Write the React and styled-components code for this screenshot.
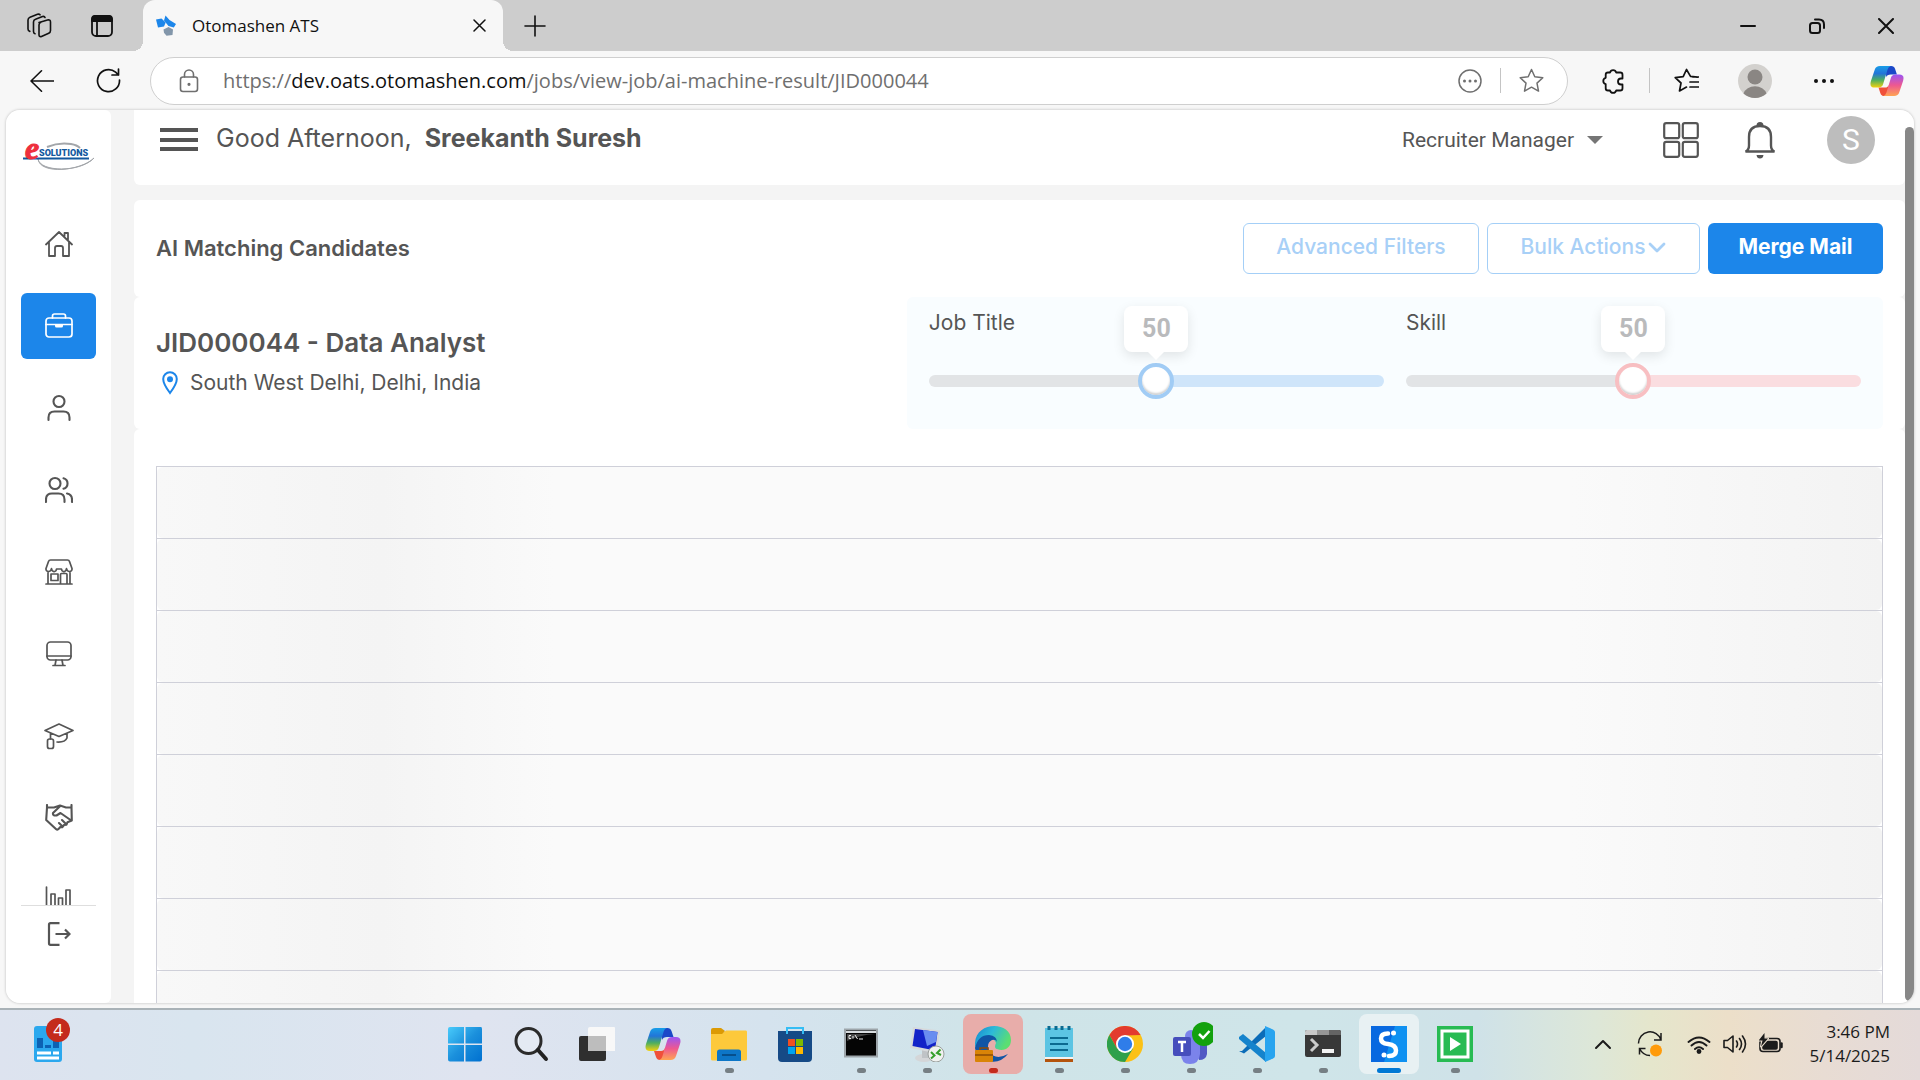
import React, { useState } from "react";
import styled, { createGlobalStyle, css } from "styled-components";

const GlobalStyle = createGlobalStyle`
  * { box-sizing: border-box; }
  html, body { margin: 0; height: 100%; }
  body { overflow: hidden; background: #f7f7f7; }
  button, input, select { font: inherit; color: inherit; }
  button { border: 0; background: none; padding: 0; }
  svg { display: block; flex: none; }
`;

const system = `"Open Sans", "Noto Sans", sans-serif`;
const brand = `Inter, "Liberation Sans", sans-serif`;

/* ---------- shell ---------- */

const Screen = styled.div`
  height: 100vh;
  display: flex;
  flex-direction: column;
  font-family: ${brand};
  color: #555;
`;

const IconButton = styled.button`
  flex: none;
  display: flex;
  align-items: center;
  justify-content: center;
  width: ${(p) => p.$w || 48}px;
  height: ${(p) => p.$h || 48}px;
  color: ${(p) => p.$color || "#111"};
`;

/* ---------- browser chrome ---------- */

const TabStrip = styled.header`
  flex: none;
  height: 51px;
  display: flex;
  align-items: center;
  background: #cdcdcd;
  font-family: ${system};
  color: #111;
`;

const StripStart = styled.div`
  display: flex;
  gap: 15px;
  padding: 0 17px 0 15px;
`;

const Tab = styled.div`
  position: relative;
  align-self: stretch;
  width: 360px;
  display: flex;
  align-items: center;
  gap: 16px;
  padding: 0 12px 0 13px;
  background: #f7f7f7;
  border-radius: 12px 12px 0 0;
  &::before, &::after {
    content: "";
    position: absolute;
    bottom: 0;
    width: 10px;
    height: 10px;
  }
  &::before { left: -10px; background: radial-gradient(circle at 0 0, transparent 10px, #f7f7f7 10px); }
  &::after { right: -10px; background: radial-gradient(circle at 100% 0, transparent 10px, #f7f7f7 10px); }
`;

const TabTitle = styled.span`
  flex: 1;
  font-size: 17px;
  line-height: 24px;
`;

const WindowControls = styled.div`
  margin-left: auto;
  display: flex;
`;

const Toolbar = styled.div`
  flex: none;
  height: 59px;
  display: flex;
  align-items: center;
  padding: 0 3px 0 18px;
  background: #f7f7f7;
  font-family: ${system};
`;

const AddressBar = styled.div`
  flex: 1;
  min-width: 0;
  height: 48px;
  margin-right: 12px;
  display: flex;
  align-items: center;
  padding: 0 12px 0 28px;
  background: #fff;
  border: 1px solid #cfcfcf;
  border-radius: 24px;
  color: #6f6f6f;
`;

const Address = styled.span`
  flex: 1;
  padding-left: 24px;
  font-size: 20px;
  line-height: 28px;
  white-space: nowrap;
  strong { font-weight: 400; color: #111; }
`;

const Rule = styled.span`
  flex: none;
  width: 1px;
  height: 25px;
  margin: 0 ${(p) => p.$gap || 6}px;
  background: #c4c4c4;
`;

/* ---------- page ---------- */

const Page = styled.div`
  flex: 1;
  min-height: 0;
  display: flex;
  margin: 0 6px 5px;
  overflow: hidden;
  background: #f4f4f4;
  border-radius: 14px;
  box-shadow: 0 0 3px rgba(0, 0, 0, 0.25);
`;

const Sidebar = styled.aside`
  flex: none;
  width: 105px;
  display: flex;
  flex-direction: column;
  padding: 0 15px;
  background: #fff;
  border-radius: 0 6px 6px 0;
`;

const LogoLink = styled.a`
  flex: none;
  height: 101px;
  padding-top: 20px;
  display: flex;
  align-items: flex-start;
  justify-content: center;
`;

const NavList = styled.nav`
  flex: 1;
  min-height: 0;
  overflow: hidden;
  display: flex;
  flex-direction: column;
  gap: 16px;
`;

const NavLink = styled.a`
  flex: none;
  height: ${(p) => p.$h || 66}px;
  display: flex;
  align-items: center;
  justify-content: center;
  border-radius: 6px;
  color: #555;
  ${(p) => p.$active && css`
    background: #1c86ea;
    color: #fff;
  `}
`;

const SidebarFooter = styled.div`
  flex: none;
  border-top: 1px solid #dedede;
  padding-bottom: 41px;
`;

const Main = styled.main`
  flex: 1;
  min-width: 0;
  margin-left: 23px;
  overflow: hidden;
`;

const ScrollRail = styled.div`
  flex: none;
  width: 9px;
  display: flex;
  padding: 17px 0 2px;
  background: #fff;
`;

const ScrollThumb = styled.div`
  flex: 1;
  border-radius: 5px;
  background: #878787;
`;

const Card = styled.section`
  background: #fff;
  border-radius: 6px;
  padding: ${(p) => p.$pad || "0 22px"};
`;

const PageHeader = styled.div`
  display: flex;
  align-items: center;
  height: 75px;
  margin-bottom: 15px;
  padding: 0 30px 16px 26px;
  background: #fff;
  border-radius: 0 0 6px 6px;
`;

const MenuButton = styled.button`
  display: flex;
  flex-direction: column;
  justify-content: space-between;
  width: 38px;
  height: 23px;
  margin-right: 18px;
  i { height: 4px; background: #555; }
`;

const Greeting = styled.p`
  flex: 1;
  margin: 0;
  padding-bottom: 4px;
  font-size: 25px;
  line-height: 32px;
  b { margin-left: 6px; font-weight: 700; }
`;

const RoleSelect = styled.label`
  display: flex;
  align-items: center;
  margin-right: 60px;
  font-family: Roboto, sans-serif;
  font-size: 21px;
  select {
    appearance: none;
    border: 0;
    padding: 0;
    background: none;
    line-height: 28px;
  }
  svg { margin-left: 12px; }
`;

const HeaderActions = styled.div`
  display: flex;
  align-items: center;
  gap: 45px;
`;

const Avatar = styled.button`
  width: 48px;
  height: 48px;
  margin-left: 6px;
  border-radius: 50%;
  background: #bdbdbd;
  color: #fff;
  font-family: Roboto, sans-serif;
  font-size: 30px;
`;

const TitleRow = styled.div`
  height: 97px;
  display: flex;
  align-items: center;
  justify-content: space-between;
  h1 {
    margin: 0;
    padding-bottom: 2px;
    font-size: 22px;
    line-height: 28px;
    font-weight: 600;
  }
`;

const ButtonRow = styled.div`
  display: flex;
  gap: 8px;
`;

const ActionButton = styled.button`
  height: 51px;
  min-width: ${(p) => p.$min}px;
  display: flex;
  align-items: center;
  justify-content: center;
  gap: 3px;
  border-radius: 6px;
  font-size: 21px;
  line-height: 28px;
  padding-bottom: 3px;
  ${(p) => p.$primary ? css`
    background: #1c86ea;
    color: #fff;
    font-weight: 700;
  ` : css`
    border: 1px solid #a4cff7;
    color: #a8d0f7;
    font-weight: 500;
  `}
`;

const JobRow = styled.div`
  display: grid;
  grid-template-columns: 10fr 13fr;
`;

const JobInfo = styled.div`
  padding-top: 28px;
  h2 {
    margin: 0;
    font-size: 26px;
    line-height: 36px;
    font-weight: 600;
  }
  p {
    display: flex;
    align-items: center;
    gap: 12px;
    margin: 8px 0 0;
    padding-left: 6px;
    font-size: 21px;
    line-height: 28px;
  }
`;

const WeightPanel = styled.div`
  display: grid;
  grid-template-columns: 1fr 1fr;
  gap: 22px;
  height: 132px;
  padding: 0 22px;
  border-radius: 6px;
  background: #f9fdff;
`;

const Weight = styled.div`
  position: relative;
  display: flex;
  flex-direction: column;
  padding-top: 12px;
  label {
    font-size: 21px;
    line-height: 28px;
  }
`;

const Bubble = styled.output`
  position: absolute;
  top: 9px;
  transform: translateX(-50%);
  width: 64px;
  height: 46px;
  border-radius: 8px;
  background: #fff;
  box-shadow: 0 4px 12px rgba(0, 0, 0, 0.1);
  color: #b9babc;
  font-size: 25px;
  line-height: 46px;
  font-weight: 700;
  font-family: Roboto, sans-serif;
  text-align: center;
  &::after {
    content: "";
    position: absolute;
    left: 24px;
    top: 46px;
    border: 8px solid transparent;
    border-top-color: #fff;
    border-bottom: 0;
  }
`;

const Range = styled.input`
  appearance: none;
  width: 100%;
  height: 36px;
  margin: 26px 0 0;
  background: none;
  &::-webkit-slider-runnable-track {
    height: 12px;
    border-radius: 6px;
    background: linear-gradient(90deg, #e2e4e6 50%, ${(p) => p.$track} 50%);
  }
  &::-webkit-slider-thumb {
    appearance: none;
    width: 36px;
    height: 36px;
    margin-top: -12px;
    border: 4px solid ${(p) => p.$ring};
    border-radius: 50%;
    background: #fff;
    box-shadow: inset 0 -2px 2px rgba(0, 0, 0, 0.18);
  }
`;

const CandidateTable = styled.table`
  width: 100%;
  border-collapse: collapse;
  border: 1px solid #cfd0d9;
  td {
    height: 72px;
    padding: 0;
    border-top: 1px solid #cfd0d9;
  }
`;

const Skeleton = styled.div`
  height: 71px;
  border-radius: 6px;
  background: linear-gradient(90deg, #f8f8f8 0, #f4f4f4 13%, #fafafa 23%, #fafafa 82%, #f3f3f3 100%);
`;

/* ---------- taskbar ---------- */

const Taskbar = styled.footer`
  flex: none;
  height: 72px;
  display: grid;
  grid-template-columns: 1fr auto 1fr;
  align-items: center;
  padding-bottom: 2px;
  border-top: 2px solid #a9b2b7;
  background: linear-gradient(90deg, #dde3ef 0, #d9e5ef 10%, #dfe4f0 25%, #d5e3ee 40%, #cfe4e8 52%, #cfe5e9 68%, #cfe2e8 77%, #dde7d8 83%, #e5e6cc 86%, #ecdfc9 90%, #e8dcd3 95%, #e4dad9 100%);
  font-family: ${system};
  color: #1b1b1b;
`;

const WidgetButton = styled.button`
  position: relative;
  justify-self: start;
  margin-left: 34px;
`;

const Badge = styled.span`
  position: absolute;
  left: 12px;
  top: -8px;
  width: 24px;
  height: 24px;
  border-radius: 50%;
  background: #c42b1c;
  color: #fff;
  font-size: 17px;
  line-height: 23px;
  text-align: center;
`;

const AppList = styled.div`
  display: flex;
`;

const AppSlot = styled.div`
  width: 66px;
  display: flex;
  justify-content: center;
`;

const AppButton = styled.button`
  position: relative;
  width: 60px;
  height: 60px;
  display: flex;
  align-items: center;
  justify-content: center;
  border-radius: 8px;
  background: ${(p) => p.$bg || "none"};
  &::after {
    content: "";
    position: absolute;
    bottom: 1px;
    width: ${(p) => (p.$mark === "#0078d4" ? 24 : 9)}px;
    height: 5px;
    border-radius: 3px;
    background: ${(p) => p.$mark || "none"};
  }
`;

const Tray = styled.div`
  justify-self: end;
  display: flex;
  align-items: center;
  padding-right: 30px;
`;

const TrayButton = styled.button`
  display: flex;
  align-items: center;
  justify-content: center;
  gap: 12px;
  margin-right: ${(p) => p.$gap}px;
`;

const Clock = styled.time`
  font-size: 17px;
  line-height: 24px;
  text-align: right;
  span { display: block; }
`;

/* ---------- icons ---------- */

const Line = ({ s = 24, w = s, vb = `0 0 ${w} ${s}`, sw = 2, children }) => (
  <svg width={w} height={s} viewBox={vb} fill="none" stroke="currentColor" strokeWidth={sw} strokeLinecap="round" strokeLinejoin="round" aria-hidden="true">
    {children}
  </svg>
);

const Workspaces = () => (
  <Line s={26} sw={1.6}>
    <path d="M13 9.5 21.500 7q3-.6 3 2v8.500q0 2-1.800 2.800l-7.200 3.200q-2.500.7-2.500-1.800V12q0-1.800 1.600-2.400z" />
    <path d="M19 4.500q-.5-1.500-2.500-1l-7 2.800Q7.500 7 7.500 9v9.500q0 1.800 1.500 2.200" />
    <path d="M14 1.800q-.8-1-2.500-.5L4 4.200Q2 5 2 7v9q0 2 1.800 2.400" />
  </Line>
);
const TabMenu = () => (
  <Line s={24} sw={1.8}>
    <rect x="2" y="2" width="20" height="20" rx="4" />
    <path d="M2 7V5q0-3 3-3h14q3 0 3 3v2z" fill="currentColor" />
    <path d="M7 8v13.500" />
  </Line>
);
const Favicon = () => (
  <svg width="20" height="21" viewBox="0 0 20 21" aria-hidden="true">
    <path d="M9.500.5 13.500 5l6.500 4-2.200 3.500-5.300-1.500L8 5.500z" fill="#1c86ea" />
    <path d="M0 4.500 5.500 3.500l4.200 4L8 11.500l-6 1z" fill="#1c86ea" />
    <path d="m7.500 14.500 5-2.500 4.500 2.500-.5 5.500-6 .8-2.500-3z" fill="#8296aa" />
  </svg>
);
const Cross = ({ s = 13, sw = 1.5 }) => <Line s={s} sw={sw}><path d={`M1 1 ${s - 1} ${s - 1}M${s - 1} 1 1 ${s - 1}`} /></Line>;
const Plus = () => <Line s={22} sw={1.6}><path d="M11 1v20M1 11h20" /></Line>;
const Minus = () => <Line s={16} sw={2}><path d="M1 8h14" /></Line>;
const Restore = () => (
  <Line s={16} sw={2}><rect x="1" y="5" width="10" height="10" rx="2.5" /><path d="M6 1.500h4q5 0 5 5V10" /></Line>
);
const Back = () => <Line s={24} sw={1.6}><path d="M23.500 12H1M11.500 1.800 1 12l10.500 10.200" /></Line>;
const Reload = () => <Line s={25} sw={1.7}><path d="M23.500 12A11 11 0 1 1 19.600 4.200L22.500 7M22.500 1v6H16" /></Line>;
const Lock = () => (
  <Line s={24} w={20} sw={1.6}><rect x="1.5" y="8" width="17" height="14.5" rx="2.5" /><path d="M5.500 8V5.500a4.500 4.500 0 0 1 9 0V8" /><circle cx="10" cy="15.3" r=".8" fill="currentColor" /></Line>
);
const More = () => (
  <Line s={24}>{[4, 12, 20].map((x) => <circle key={x} cx={x} cy="12" r="2" fill="currentColor" stroke="none" />)}</Line>
);
const MoreRing = () => (
  <Line s={24} sw={1.5}><circle cx="12" cy="12" r="11" />{[6.5, 12, 17.5].map((x) => <circle key={x} cx={x} cy="12" r="1.5" fill="currentColor" stroke="none" />)}</Line>
);
const Star = () => <Line s={25} sw={1.5}><path d="m12.500 1.500 3.300 7.200 8 1-5.800 5.400 1.500 8-7-3.900-7 3.900 1.500-8L1.200 9.700l8-1z" /></Line>;
const Favourites = () => (
  <Line s={25} sw={1.7}><path d="m23.500 9.200-7-.8L12.500 1.500 9.200 8.700l-8 1L7 15l-1.500 8 7-3.900M16 14h8.500M16 19h8.500M19 9h5.500" /></Line>
);
const Puzzle = () => (
  <Line s={26} w={24} sw={1.8}><path d="M9 4.500a3.200 3.200 0 0 1 6.200 0h4q2.300 0 2.300 2.300v3.700h-1.500a3 3 0 0 0 0 6h1.500v3.700q0 2.300-2.300 2.300h-4a3.200 3.200 0 0 1-6.200 0H7q-2.300 0-2.300-2.300V16a3.200 3.200 0 0 1 0-6.200v-3Q4.700 4.500 7 4.500z" /></Line>
);
const Profile = () => (
  <svg width="34" height="34" viewBox="0 0 34 34" aria-hidden="true">
    <circle cx="17" cy="17" r="17" fill="#d3d1ce" />
    <circle cx="17" cy="13" r="7.500" fill="#8a8683" />
    <path d="M5.500 29.500a12 10 0 0 1 23 0A17 17 0 0 1 5.500 29.500z" fill="#8a8683" />
  </svg>
);
const Copilot = ({ s = 34, id }) => (
  <svg width={s} height={s} viewBox="0 0 36 34" aria-hidden="true">
    <defs>
      <linearGradient id={`${id}a`} x1="0" y1="0" x2="0" y2="1"><stop offset="0" stopColor="#189ee8" /><stop offset=".35" stopColor="#2275d8" /><stop offset=".65" stopColor="#4cae60" /><stop offset="1" stopColor="#f5d20c" /></linearGradient>
      <linearGradient id={`${id}b`} x1="0" y1="0" x2="0" y2="1"><stop offset="0" stopColor="#9a55f5" /><stop offset=".5" stopColor="#ee5890" /><stop offset="1" stopColor="#ffa552" /></linearGradient>
    </defs>
    <path d="M17 1h5.500q3 0 4 3l2 6H22q-4 0-5 3z" fill="#1b48c8" />
    <path d="M9 24h7q3 0 4-3l-1 9q-1 3-4 3-3 0-4-3z" fill="#f0503a" />
    <path d="M10.500 1H22q-2.500.5-3.500 4L14 20q-1 4-5 4H5q-6 0-4-7L5 5q1.200-4 5.500-4z" fill={`url(#${id}a)`} />
    <path d="M25.500 33H14q2.500-.5 3.500-4L22 14q1-4 5-4h4q6 0 4 7l-4 12q-1.200 4-5.500 4z" fill={`url(#${id}b)`} />
  </svg>
);

const Logo = () => (
  <svg width="72" height="44" viewBox="0 -14 72 44" role="img" aria-label="eSolutions">
    <path d="M24 3Q36-2 48 0q6 1 9 4" fill="none" stroke="#a3a6aa" strokeWidth="2" />
    <path d="M15 15c2 13 42 14 56-1C58 27 17 31 15 15z" fill="#a3a6aa" stroke="#a3a6aa" />
    <path d="M0 14.500h66" stroke="#12589e" strokeWidth="2" />
    <text x="16" y="12" fontFamily='Roboto, sans-serif' fontWeight="900" fontSize="9" fill="#12589e">SOLUTIONS</text>
    <text x="2" y="15" fontFamily='"Liberation Serif", serif' fontWeight="700" fontStyle="italic" fontSize="32" fill="#ee2f3c" stroke="#ee2f3c" strokeWidth="1">e</text>
  </svg>
);
const Home = () => (
  <Line s={28} sw={1.8}><path d="M1 14.500 14 2l13 12.500M4 12v14h6v-8q0-2 2-2h4q2 0 2 2v8h6V12M19.500 6V3h3.500v6.500" /></Line>
);
const Briefcase = () => (
  <Line s={28} sw={1.7}><rect x="1" y="6" width="26" height="19" rx="3" /><path d="M7.500 6V4q0-2 2-2h9q2 0 2 2v2M1 12.500h26" /><path d="M10 13h8v1q0 1.500-1.500 1.500h-5Q10 15.500 10 14z" fill="currentColor" stroke="none" /></Line>
);
const Person = () => <Line s={28} sw={2.1}><circle cx="14" cy="7.500" r="5.500" /><path d="M3.500 26v-2.500q0-6 6-6h9q6 0 6 6V26" /></Line>;
const People = () => (
  <Line s={28} sw={2.1}><circle cx="10" cy="7.500" r="5.500" /><path d="M1 26v-2.500q0-6 6-6h6.500q6 0 6 6V26M18.500 2.200a5.500 5.500 0 0 1 0 10.600M22 17.500q5 1 5 6V26" /></Line>
);
const Store = () => (
  <Line s={28} sw={1.7}><path d="M5.500 2h17q1.500 0 2 1.500l2.500 7c.5 4-5 4-5.500 0-.5 4-4.500 4-5 .5h-5c-.5 3.500-4.500 3.500-5-.5C6 14.500.5 14.500 1 10.500l2.500-7Q4 2 5.500 2zM3 13.500V26M25 13.500V26M1 26h26M15.500 26V16.500q0-1 1-1h4.500q1 0 1 1V26M6 16h7v6.500H6z" /></Line>
);
const Monitor = () => <Line s={28} sw={1.7}><rect x="2" y="2" width="24" height="18" rx="3.5" /><path d="M2 16h24M11 20l-1 5.500M17 20l1 5.500M8 25.500h12" /></Line>;
const Cap = () => (
  <Line s={28} w={30} sw={1.7}><path d="m1 8.500 14-6.500 14 6.500-14 6zM6.500 11v6M23 11.500V16q-2 4.500-10 4" /><rect x="3.5" y="17" width="6" height="9.5" rx="2" /></Line>
);
const Handshake = () => (
  <Line s={28} sw={2.1}><path d="M2 1v2.500h7l6-2 6 2h5.500V1M2 3.500 1.200 16l10 9.200q1 .8 2 0l2-2M15.200 23l2 .3 1.800-2.300 2.500-.3 1-2.500 4.300-1.700-.3-13M15.500 1.800 8 9q-.5 3 3.500 2.500l4-2.500 10.800 7.500M14 19l2.800 2.800M17 16l3.500 3.500" /></Line>
);
const Bars = () => <Line s={28} sw={1.7}><path d="M1.500 1v26M6 27V8h4v19M13.500 27V12h4v15M21 27V4h4v23" /></Line>;
const Exit = () => (
  <svg width="24" height="24" viewBox="0 0 24 24" fill="none" stroke="currentColor" strokeWidth="2.200" aria-hidden="true"><path d="M12.500 1.200H3.500Q2 1.200 2 2.700v18.600q0 1.500 1.500 1.500h9M8.500 12h14M18 7.500l4.500 4.500-4.500 4.500" /></svg>
);
const Grid = () => (
  <Line s={36} sw={2.2}>{[1.2, 19.8].map((x) => [1.2, 19.8].map((y) => <rect key={`${x}${y}`} x={x} y={y} width="15" height="15" rx="2" />))}</Line>
);
const Bell = () => (
  <svg width="32" height="38" viewBox="0 0 32 38" aria-hidden="true"><path d="M1.500 30.500q3.500-1.500 3.500-6V16Q5 5 16 5t11 11v8.500q0 4.500 3.500 6z" fill="none" stroke="currentColor" strokeWidth="2.400" /><path d="M12.500 4.500a3.500 3.500 0 0 1 7 0zM12.500 34h7q-.5 3.500-3.500 3.500T12.500 34z" fill="currentColor" /></svg>
);
const Pin = () => (
  <svg width="16" height="24" viewBox="0 0 16 24" aria-hidden="true"><path d="M8 22Q1.200 13 1.200 8a6.800 6.800 0 0 1 13.600 0Q14.800 13 8 22z" fill="none" stroke="#1c86ea" strokeWidth="2" /><circle cx="8" cy="8.200" r="3" fill="#1c86ea" /></svg>
);
const Chevron = ({ w = 18, flip }) => <Line s={12} w={w} sw={flip ? 2 : 2.8}><path d={flip ? `M2 10 ${w / 2} 3 ${w - 2} 10` : `M2 3 ${w / 2} 10 ${w - 2} 3`} /></Line>;

const App36 = ({ children, w = 36 }) => <svg width={w} height="36" viewBox={`0 0 ${w} 36`} aria-hidden="true">{children}</svg>;

const Widgets = () => (
  <App36 w={28}>
    <rect width="28" height="36" rx="3" fill="#2ba8ee" />
    <path d="M3 12h6v10H3zM11 19h6v3h-6zM19 14h6v8h-6z" fill="#0c62b4" />
    <path d="M3 27h14M19 27h6M3 32h22" stroke="#fff" strokeWidth="3" />
  </App36>
);

const apps = [
  { name: "Start", art: (
    <App36>
      <defs><linearGradient id="win" x1="0" y1="0" x2="1" y2="1"><stop offset="0" stopColor="#49cbfb" /><stop offset=".5" stopColor="#1b90dc" /><stop offset="1" stopColor="#0070d0" /></linearGradient></defs>
      <path d="M3 1h14v16.500H1V3q0-2 2-2zM18.500 1H34q1 0 1 2v14.500H18.500zM1 19h16v16.500H3q-2 0-2-2zM18.500 19H35v14.500q0 2-2 2H18.500z" fill="url(#win)" />
    </App36>) },
  { name: "Search", art: (
    <App36><circle cx="15.500" cy="15" r="12.500" fill="#e4eaf3" stroke="#2b2b2b" strokeWidth="3" /><path d="m25 24 8 9" stroke="#222" strokeWidth="4" strokeLinecap="round" /></App36>) },
  { name: "Task View", art: (
    <App36><rect x="0" y="10" width="27" height="25" rx="2" fill="#2f2f2f" /><path d="M11 1h24q1 0 1 1v23H9V3q0-2 2-2z" fill="#f8f8f8" /><path d="M9 10h18v15H9z" fill="#bdbdbd" /></App36>) },
  { name: "Copilot", art: <Copilot s={36} id="task" /> },
  { name: "File Explorer", mark: "#767f84", art: (
    <App36><path d="M0 4q0-2 2-2h8l4 3-3 4H0z" fill="#dc9a04" /><path d="M0 8h11l4-3.500h20q1 0 1 1.500v27q0 1.500-1.500 1.500h-33Q0 34.500 0 33z" fill="#fdc93b" /><path d="M6 35V26q0-2.500 2.500-2.500h19Q30 23.500 30 26v9z" fill="#0d76c7" /><path d="M11 29h14" stroke="#064f8c" strokeWidth="2" /></App36>) },
  { name: "Microsoft Store", art: (
    <App36><path d="M1 5h34v27q0 4-4 4H5q-4 0-4-4z" fill="#164a86" /><path d="M10 8V2h16v6" fill="none" stroke="#35bdf4" strokeWidth="2" /><path d="M11 13h7v7h-7z" fill="#f04f22" /><path d="M19 13h7v7h-7z" fill="#7fba00" /><path d="M11 21h7v7h-7z" fill="#00a4ef" /><path d="M19 21h7v7h-7z" fill="#ffb900" /></App36>) },
  { name: "Command Prompt", mark: "#767f84", art: (
    <App36><rect x="2" y="3.500" width="32" height="27" fill="#050505" stroke="#9da5aa" strokeWidth="2" /><path d="M3 5h30v2H3z" fill="#d8dcdf" /><path d="M4 15q13-6 28-7H4z" fill="#444" /><path d="M8 9.500H6v3h2M10 10v2.500M12 9l2.500 4M16 13h4" fill="none" stroke="#eee" /></App36>) },
  { name: "Remote Desktop", mark: "#767f84", art: (
    <App36><ellipse cx="15" cy="32" rx="9" ry="4" fill="#d4d6d8" /><path d="M13 24h8v8h-8z" fill="#bfc3c6" /><path d="m4 1 27 3.500-3 23L1 22z" fill="#d7d9db" /><path d="m6 3 22.500 3L26 24.500 3.500 20z" fill="#1322c8" /><path d="m14 4 14.500 2L27 16l-9 4z" fill="#6a8cf0" /><circle cx="27" cy="28" r="8" fill="#f0f2f0" stroke="#9a9f9c" /><path d="m22 26 3.500 3.500-3.500 3M31.500 23.500 28 27l4 2" fill="none" stroke="#37a02c" strokeWidth="2" /></App36>) },
  { name: "Microsoft Edge", mark: "#c42b1c", bg: "#e8adaa", art: (
    <App36>
      <defs><linearGradient id="edge" x1="0" y1="0" x2="1" y2=".4"><stop offset="0" stopColor="#1585cf" /><stop offset=".5" stopColor="#2dbad8" /><stop offset="1" stopColor="#5bde72" /></linearGradient></defs>
      <path d="M0 17C1-5 36-5 36 14c0 8-7 12-14 9-3-1-2-4-1-6Q19 11 12 13 0 15 0 24z" fill="url(#edge)" />
      <path d="M0 22Q3 9 14 9q8 1 8 7-1-3-5-2-6 3-3 11 6 10 19 3-8 10-20 7Q1 32 0 22z" fill="#1055a5" />
      <rect x="0" y="24" width="18" height="12" rx="1" fill="#d98407" /><path d="M5 24v-2h8v2M0 29h18" fill="none" stroke="#8c4b06" strokeWidth="1.500" />
    </App36>) },
  { name: "Notepad", mark: "#767f84", art: (
    <App36><path d="M4 2h28v29H4z" fill="#5cc4e3" /><path d="M4 31h28v2H4z" fill="#f3f3f3" /><path d="M4 33h28v3H4z" fill="#b4540d" /><path d="M9 12h18M9 18h18M9 24h18" stroke="#0b6a90" strokeWidth="2" /><path d="M8 0v4M15 0v4M21 0v4M28 0v4" stroke="#0b6a90" strokeWidth="3" /></App36>) },
  { name: "Google Chrome", mark: "#767f84", art: (
    <App36><circle cx="18" cy="18" r="18" fill="#fbc116" /><path d="M2.400 9A18 18 0 0 1 33.600 9L18 9.500l-8 13z" fill="#e33b2e" /><path d="M2.400 9A18 18 0 0 0 18 36l8-13.500-16 0z" fill="#2da04c" /><circle cx="18" cy="18" r="9" fill="#fff" /><circle cx="18" cy="18" r="7.200" fill="#2f7de9" /></App36>) },
  { name: "Microsoft Teams", mark: "#767f84", art: (
    <svg width="44" height="44" viewBox="0 0 44 44" aria-hidden="true"><circle cx="22" cy="14" r="6" fill="#7b83eb" /><path d="M23 18h15v14q-1 6-8 6z" fill="#5159c4" /><path d="M12 18h19v14q-1 10-10 10t-9-10z" fill="#7b83eb" /><rect x="4" y="15" width="18" height="19" rx="2" fill="#464ebc" /><path d="M9 20h8M13 20v10" stroke="#fff" strokeWidth="2.500" /><circle cx="35" cy="12" r="12" fill="#13a10e" /><path d="m30 12 4 4 6.500-7" fill="none" stroke="#fff" strokeWidth="2.500" /></svg>) },
  { name: "Visual Studio Code", mark: "#767f84", art: (
    <App36><path d="M3 25 27 1v9L5 27.500 0 25z" fill="#0b6cb8" /><path d="m0 11 4-3 23 19v9L0 13z" fill="#1583cc" /><path d="m26 0 8 3.500q2 1 2 2.500v24q0 1.500-2 2.500L26 36z" fill="#28a4ef" /></App36>) },
  { name: "Terminal", mark: "#767f84", art: (
    <App36><rect y="4" width="36" height="27" rx="2" fill="#383838" /><path d="M0 8V6q0-2 2-2h10v5H0z" fill="#c9c9c9" /><path d="M12 4h12v5H12z" fill="#969696" /><path d="M24 4h10q2 0 2 2v3H24z" fill="#646464" /><path d="m6 13 6 6-6 6" fill="none" stroke="#ccc" strokeWidth="3" /><path d="M17 25h12" stroke="#f2f2f2" strokeWidth="4" /></App36>) },
  { name: "Screen recorder", mark: "#0078d4", bg: "#e8f1f3", art: (
    <App36><path d="M0 0h36v36H0z" fill="#0869e0" /><path d="M24 0h12v36H13z" fill="#0f91f1" /><path d="M17 7.500q-7 0-7 5t7 5.500q8 1 8 6.500t-7 5.500" fill="none" stroke="#fff" strokeWidth="4.500" strokeLinecap="round" /><circle cx="22.500" cy="7" r="2.500" fill="#fff" /><circle cx="13" cy="29" r="2.500" fill="#fff" /></App36>) },
  { name: "Player", mark: "#767f84", art: (
    <App36><path d="M0 0h36v36H0z" fill="#28bb53" /><path d="M5 5h26v26H5z" fill="none" stroke="#fff" strokeWidth="3" /><path d="m13 11 11 7-11 7z" fill="#fff" /></App36>) },
];

const Sync = () => (
  <svg width="26" height="26" viewBox="0 0 26 26" fill="none" stroke="#1b1b1b" strokeWidth="1.500" aria-hidden="true"><path d="M1.500 12.500A11.500 11.500 0 0 1 24 9M24 2v7h-7M2.500 23.500v-6h6M2.500 17.500q3.500 7 10.500 7" /><circle cx="19" cy="19.500" r="6" fill="#ff9b0a" stroke="none" /></svg>
);
const Wifi = () => (
  <Line s={24} sw={1.9}><path d="M1.500 10q10.500-9 21 0M4.500 13.500q7.500-7 15 0M8 17q4-3.500 8 0" /><circle cx="12" cy="19.500" r="1.500" fill="currentColor" /></Line>
);
const Sound = () => <Line s={24} sw={1.6}><path d="M1 8.500h3.500L10 4v16l-5.500-4.500H1zM13.500 9q2 3 0 6M16.500 6.500q4 5.500 0 11M19.500 4q6 8 0 16" /></Line>;
const Battery = () => (
  <Line s={24} sw={1.6}>
    <rect x="1" y="6.500" width="20" height="13" rx="3" /><rect x="4" y="9.500" width="14" height="7.500" rx="1" fill="currentColor" /><path d="M22.500 11.500v3.500" strokeWidth="2.500" />
    <path d="M5.500 1-.5 8.500h4l-1.500 6L9 6.500H5.500z" fill="currentColor" stroke="#eadfcf" strokeWidth="2" paintOrder="stroke" />
  </Line>
);

/* ---------- composition ---------- */

const navItems = [
  ["Home", Home], ["Jobs", Briefcase], ["Candidates", Person], ["Clients", People], ["Vendors", Store],
  ["Interviews", Monitor], ["Training", Cap], ["Placements", Handshake], ["Reports", Bars],
];

function WeightSlider({ id, label, track, ring }) {
  const [value, setValue] = useState(50);
  return (
    <Weight>
      <label htmlFor={id}>{label}</label>
      <Bubble htmlFor={id} style={{ left: `${value}%` }}>{value}</Bubble>
      <Range id={id} type="range" min="0" max="100" value={value} $track={track} $ring={ring} onChange={(e) => setValue(Number(e.target.value))} />
    </Weight>
  );
}

function Browser() {
  return (
    <>
      <TabStrip>
        <StripStart>
          <IconButton aria-label="Workspaces"><Workspaces /></IconButton>
          <IconButton aria-label="Tab actions"><TabMenu /></IconButton>
        </StripStart>
        <Tab>
          <Favicon />
          <TabTitle>Otomashen ATS</TabTitle>
          <IconButton $w={24} $h={24} aria-label="Close tab"><Cross /></IconButton>
        </Tab>
        <IconButton $w={64} aria-label="New tab"><Plus /></IconButton>
        <WindowControls>
          <IconButton $w={69} aria-label="Minimize"><Minus /></IconButton>
          <IconButton $w={69} aria-label="Restore"><Restore /></IconButton>
          <IconButton $w={69} aria-label="Close window"><Cross s={16} sw={2} /></IconButton>
        </WindowControls>
      </TabStrip>
      <Toolbar>
        <IconButton aria-label="Back"><Back /></IconButton>
        <IconButton $w={84} aria-label="Refresh"><Reload /></IconButton>
        <AddressBar>
          <Lock />
          <Address>https://<strong>dev.oats.otomashen.com</strong>/jobs/view-job/ai-machine-result/JID000044</Address>
          <IconButton $color="#6f6f6f" aria-label="Page options"><MoreRing /></IconButton>
          <Rule />
          <IconButton $color="#6f6f6f" aria-label="Add to favourites"><Star /></IconButton>
        </AddressBar>
        <IconButton $w={66} aria-label="Extensions"><Puzzle /></IconButton>
        <Rule $gap={3} />
        <IconButton $w={66} aria-label="Favourites"><Favourites /></IconButton>
        <IconButton $w={72} aria-label="Profile"><Profile /></IconButton>
        <IconButton $w={66} aria-label="Settings"><More /></IconButton>
        <IconButton $w={60} aria-label="Copilot"><Copilot id="side" /></IconButton>
      </Toolbar>
    </>
  );
}

export default function App() {
  return (
    <Screen>
      <GlobalStyle />
      <Browser />
      <Page>
        <Sidebar>
          <LogoLink href="#"><Logo /></LogoLink>
          <NavList>
            {navItems.map(([name, Icon]) => (
              <NavLink key={name} href="#" aria-label={name} $active={name === "Jobs"}><Icon /></NavLink>
            ))}
          </NavList>
          <SidebarFooter>
            <NavLink href="#" $h={56} aria-label="Log out"><Exit /></NavLink>
          </SidebarFooter>
        </Sidebar>
        <Main>
          <PageHeader>
            <MenuButton aria-label="Menu"><i /><i /><i /></MenuButton>
            <Greeting>Good Afternoon, <b>Sreekanth Suresh</b></Greeting>
            <RoleSelect>
              <select aria-label="Role" defaultValue="rm"><option value="rm">Recruiter Manager</option></select>
              <svg width="16" height="8" viewBox="0 0 16 8" aria-hidden="true"><path d="M0 0h16L8 8z" fill="#757575" /></svg>
            </RoleSelect>
            <HeaderActions>
              <IconButton $w={36} $color="#555" aria-label="Apps"><Grid /></IconButton>
              <IconButton $w={32} $color="#555" aria-label="Notifications"><Bell /></IconButton>
              <Avatar aria-label="Account">S</Avatar>
            </HeaderActions>
          </PageHeader>
          <Card>
            <TitleRow>
              <h1>AI Matching Candidates</h1>
              <ButtonRow>
                <ActionButton $min={236}>Advanced Filters</ActionButton>
                <ActionButton $min={213}>Bulk Actions<Chevron /></ActionButton>
                <ActionButton $min={175} $primary>Merge Mail</ActionButton>
              </ButtonRow>
            </TitleRow>
          </Card>
          <Card>
            <JobRow>
              <JobInfo>
                <h2>JID000044 - Data Analyst</h2>
                <p><Pin />South West Delhi, Delhi, India</p>
              </JobInfo>
              <WeightPanel>
                <WeightSlider id="job-title" label="Job Title" track="#cfe5fa" ring="#a1ccf5" />
                <WeightSlider id="skill" label="Skill" track="#fadde0" ring="#f8bfc2" />
              </WeightPanel>
            </JobRow>
          </Card>
          <Card $pad="37px 22px 0">
            <CandidateTable aria-label="Matching candidates" aria-busy="true">
              <tbody>
                {Array.from({ length: 10 }, (_, i) => <tr key={i}><td><Skeleton /></td></tr>)}
              </tbody>
            </CandidateTable>
          </Card>
        </Main>
        <ScrollRail><ScrollThumb /></ScrollRail>
      </Page>
      <Taskbar>
        <WidgetButton aria-label="Widgets"><Widgets /><Badge>4</Badge></WidgetButton>
        <AppList>
          {apps.map((a) => (
            <AppSlot key={a.name}><AppButton aria-label={a.name} $bg={a.bg} $mark={a.mark}>{a.art}</AppButton></AppSlot>
          ))}
        </AppList>
        <Tray>
          <TrayButton $gap={25} aria-label="Show hidden icons"><Chevron w={18} flip /></TrayButton>
          <TrayButton $gap={24} aria-label="Update available"><Sync /></TrayButton>
          <TrayButton $gap={26} aria-label="Network, volume and battery"><Wifi /><Sound /><Battery /></TrayButton>
          <Clock><span>3:46 PM</span><span>5/14/2025</span></Clock>
        </Tray>
      </Taskbar>
    </Screen>
  );
}
